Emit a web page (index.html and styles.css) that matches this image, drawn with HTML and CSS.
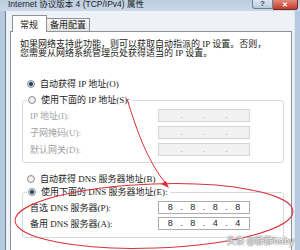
FILE: index.html
```html
<!DOCTYPE html>
<html>
<head>
    <title>Internet 协议版本 4 (TCP/IPv4) 属性</title>
    <meta charset="utf-8">
    <link rel="stylesheet" href="styles.css">
</head>

<body>
    <div class="window">
        <div class="titlebar">
            <span class="title">Internet 协议版本 4 (TCP/IPv4) 属性</span>
            <div class="caption-btns">
                <span class="btn-help">?</span>
                <span class="btn-close">✕</span>
            </div>
        </div>

        <div class="frame">
            <div class="frame-side left"></div>
            <div class="dialog">
                <div class="tabs">
                    <span class="tab active">常规</span>
                    <span class="tab">备用配置</span>
                </div>

                <div class="panel">
                    <p class="intro">如果网络支持此功能，则可以获取自动指派的 IP 设置。否则，<br>您需要从网络系统管理员处获得适当的 IP 设置。</p>

                    <div class="radio-row first"><span class="radio checked"></span>自动获得 IP 地址(O)</div>

                    <div class="group ip-group">
                        <div class="legend"><span class="radio"></span>使用下面的 IP 地址(S):</div>
                        <div class="field-row disabled">
                            <label>IP 地址(I):</label>
                            <div class="ip-field">
                                <span class="oct"></span><span class="dot">.</span>
                                <span class="oct"></span><span class="dot">.</span>
                                <span class="oct"></span><span class="dot">.</span>
                                <span class="oct"></span>
                            </div>
                        </div>
                        <div class="field-row disabled">
                            <label>子网掩码(U):</label>
                            <div class="ip-field">
                                <span class="oct"></span><span class="dot">.</span>
                                <span class="oct"></span><span class="dot">.</span>
                                <span class="oct"></span><span class="dot">.</span>
                                <span class="oct"></span>
                            </div>
                        </div>
                        <div class="field-row disabled">
                            <label>默认网关(D):</label>
                            <div class="ip-field">
                                <span class="oct"></span><span class="dot">.</span>
                                <span class="oct"></span><span class="dot">.</span>
                                <span class="oct"></span><span class="dot">.</span>
                                <span class="oct"></span>
                            </div>
                        </div>
                    </div>

                    <div class="radio-row dns-auto"><span class="radio"></span>自动获得 DNS 服务器地址(B)</div>

                    <div class="group dns-group">
                        <div class="legend"><span class="radio checked"></span>使用下面的 DNS 服务器地址(E):</div>
                        <div class="field-row">
                            <label>首选 DNS 服务器(P):</label>
                            <div class="ip-field">
                                <span class="oct">8</span><span class="dot">.</span>
                                <span class="oct">8</span><span class="dot">.</span>
                                <span class="oct">8</span><span class="dot">.</span>
                                <span class="oct">8</span>
                            </div>
                        </div>
                        <div class="field-row">
                            <label>备用 DNS 服务器(A):</label>
                            <div class="ip-field">
                                <span class="oct">8</span><span class="dot">.</span>
                                <span class="oct">8</span><span class="dot">.</span>
                                <span class="oct">4</span><span class="dot">.</span>
                                <span class="oct">4</span>
                            </div>
                        </div>
                    </div>
                </div>
            </div>
            <div class="frame-side right"></div>
        </div>

        <!-- hand drawn red markup over the screenshot -->
        <svg class="markup" width="300" height="250" viewBox="0 0 300 250">
            <path d="M127 99 C 136 127, 146 160, 167 185" fill="none" stroke="#d8323a" stroke-width="1"/>
            <polygon points="169,188 161,184 166,181" fill="#d8323a"/>
            <ellipse cx="154" cy="216" rx="139" ry="32" transform="rotate(-2 154 216)" fill="none" stroke="#d8323a" stroke-width="1"/>
        </svg>

        <div class="watermark">头条 @静静baby</div>
    </div>
</body>
</html>
```

FILE: styles.css
```css
html, body {
    margin: 0;
    padding: 0;
    width: 300px;
    height: 250px;
    overflow: hidden;
}

body {
    font-family: "Liberation Serif", "Noto Sans CJK SC", serif;
    font-size: 9px;
    line-height: 12px;
    color: #1a1a1a;
}

.window {
    position: relative;
    width: 300px;
    height: 250px;
    overflow: hidden;
    background: #eef2f6;
}

/* title bar */
.titlebar {
    height: 11px;
    display: flex;
    align-items: flex-start;
    background: linear-gradient(#bccde1, #cbd8e8);
}

.title {
    font-family: "Liberation Sans", "Noto Sans CJK SC", sans-serif;
    font-size: 8.5px;
    line-height: 9px;
    padding-left: 8px;
    color: #1e1e1e;
}

.caption-btns {
    display: flex;
    margin-left: auto;
    margin-right: 2px;
}

.btn-help,
.btn-close {
    height: 9px;
    display: flex;
    justify-content: center;
    align-items: center;
    box-sizing: border-box;
    border: 1px solid #6f7f93;
    border-top: none;
    font-family: "Liberation Sans", sans-serif;
    font-weight: bold;
}

.btn-help {
    width: 21px;
    background: linear-gradient(#dde6f0, #bccbdc);
    color: #3a4a5e;
    font-size: 8px;
    border-radius: 0 0 0 3px;
}

.btn-close {
    width: 25px;
    height: 10px;
    background: linear-gradient(#e08a7c, #c4392c);
    color: #fff;
    font-size: 7px;
    border-left: none;
    border-color: #7a2a22;
    border-radius: 0 0 3px 0;
}

/* window frame */
.frame {
    display: flex;
    height: 239px;
}

.frame-side {
    width: 5px;
    background: #b5c9e0;
}

.frame-side.left {
    border-right: 1px solid #6e7f93;
}

.frame-side.right {
    width: 5px;
    border-left: 1px solid #dfe7f0;
}

.dialog {
    flex: 1;
    padding: 4px 2px 0 4px;
    background: #eef1f5;
    display: flex;
    flex-direction: column;
}

/* tabs */
.tabs {
    display: flex;
    align-items: flex-end;
    height: 16px;
    margin-left: 2px;
}

.tab {
    height: 12px;
    line-height: 12px;
    padding: 0 3px;
    border: 1px solid #8d929a;
    border-bottom: none;
    background: linear-gradient(#f6f6f6, #e2e2e2);
    margin-left: -1px;
}

.tab.active {
    position: relative;
    height: 13px;
    padding: 3px 8px 0 7px;
    margin-left: 0;
    margin-bottom: -1px;
    background: #fff;
}

.panel {
    flex: 1;
    background: #fff;
    border: 1px solid #8d929a;
    border-bottom: none;
    padding: 8px 7px 0 9px;
}

.intro {
    margin: 0;
    line-height: 9px;
    white-space: nowrap;
}

.radio-row {
    display: flex;
    align-items: center;
    height: 12px;
    margin-left: 7px;
}

.radio-row.first {
    margin-top: 20px;
}

.radio-row.dns-auto {
    margin-top: 10px;
}

.radio {
    width: 8px;
    height: 8px;
    box-sizing: border-box;
    border-radius: 50%;
    border: 1px solid #8e8f8f;
    background: radial-gradient(circle, #fbfbfb 0, #dcdcdc 100%);
    margin-right: 5px;
    flex-shrink: 0;
}

.radio.checked {
    background: radial-gradient(circle, #1b3654 0, #2d4f75 1.6px, #c9d5e2 2.4px, #eef2f6 100%);
}

/* group boxes */
.group {
    border: 1px solid #d5dadf;
    border-radius: 3px;
    margin-left: 2px;
    padding: 0 0 6px 7px;
}

.ip-group {
    margin-top: 10px;
}

.dns-group {
    margin-top: 7px;
    padding-bottom: 7px;
}

.legend {
    display: flex;
    align-items: center;
    width: max-content;
    height: 12px;
    margin-top: -7px;
    margin-left: -3px;
    padding: 0 2px 0 1px;
    background: #fff;
}

.field-row {
    display: flex;
    align-items: center;
    height: 13px;
    margin-top: 4px;
}

.field-row:nth-child(2) {
    margin-top: 3px;
}

.dns-group .field-row {
    margin-top: 3px;
}

.field-row label {
    width: 128px;
}

.field-row.disabled label {
    color: #a2a2a2;
}

.ip-field {
    width: 92px;
    height: 13px;
    box-sizing: border-box;
    border: 1px solid #abadb3;
    display: flex;
    align-items: center;
    line-height: 11px;
    font-family: "Liberation Sans", sans-serif;
    font-size: 9px;
}

.disabled .ip-field {
    background: #f1f1f1;
    border-color: #d6d6d6;
    color: #b0b0b0;
}

.oct {
    flex: 1;
    text-align: center;
}

.dot {
    width: 0;
    display: flex;
    justify-content: center;
}

/* overlays */
.markup {
    position: absolute;
    left: 0;
    top: 0;
    pointer-events: none;
}

.watermark {
    position: absolute;
    right: 6px;
    bottom: 4px;
    font-family: "Noto Sans CJK SC", sans-serif;
    font-size: 9px;
    line-height: 10px;
    color: #fff;
    text-shadow: 0 0 1px #444, 0 0 2px #666;
}
```
